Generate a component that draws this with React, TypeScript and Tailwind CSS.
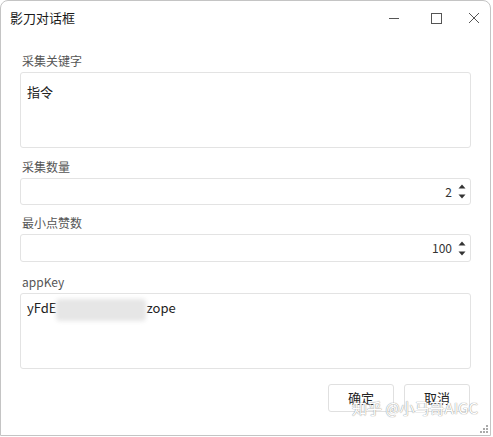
import React from 'react';

const font = { fontFamily: '"Noto Sans CJK SC", "Noto Sans", sans-serif' };

function Label({ children }: { children: React.ReactNode }) {
  return <div className="text-[12px] leading-[16px] text-[#555] pl-[2px] mb-[3px]">{children}</div>;
}

function Spinner() {
  return (
    <div className="flex flex-col items-center gap-[5px] ml-[6px] mr-[4px]">
      <svg width="8" height="5" viewBox="0 0 8 5"><path d="M4 0.5 L7.5 4.5 L0.5 4.5 Z" fill="#333" /></svg>
      <svg width="8" height="5" viewBox="0 0 8 5"><path d="M0.5 0.5 L7.5 0.5 L4 4.5 Z" fill="#333" /></svg>
    </div>
  );
}

function NumberField({ value, h }: { value: string; h: string }) {
  return (
    <div className={`${h} rounded-[3px] border border-[#e3e3e3] flex items-center justify-end`}>
      <span className="text-[12px] leading-[16px] text-[#333]">{value}</span>
      <Spinner />
    </div>
  );
}

export default function App() {
  return (
    <div className="w-[493px] h-[437px] bg-white" style={font}>
      <div className="w-[491px] h-[436px] border border-[#c4c4c4] rounded-t-[8px] flex flex-col relative">
        <div className="h-[34px] flex items-center pl-[9px] pr-[10px]">
          <span className="text-[13px] leading-[18px] text-[#1a1a1a] flex-1">影刀对话框</span>
          <div className="w-[10px] h-[1px] bg-[#555]" />
          <div className="w-[11px] h-[11px] border border-[#555] ml-[32px]" />
          <svg className="ml-[26px]" width="12" height="12" viewBox="0 0 12 12"><path d="M1 1 L11 11 M11 1 L1 11" stroke="#555" strokeWidth="1" /></svg>
        </div>
        <div className="flex flex-col px-[19px] pt-[18px]">
          <Label>采集关键字</Label>
          <div className="h-[76px] rounded-[3px] border border-[#e3e3e3] px-[6px] pt-[5px]">
            <span className="text-[13px] leading-[18px] text-[#222]">指令</span>
          </div>
          <div className="mt-[11px]"><Label>采集数量</Label></div>
          <NumberField value="2" h="h-[27px]" />
          <div className="mt-[10px]"><Label>最小点赞数</Label></div>
          <NumberField value="100" h="h-[28px]" />
          <div className="mt-[12px]"><Label>appKey</Label></div>
          <div className="h-[76px] rounded-[3px] border border-[#e3e3e3] px-[6px] pt-[5px] flex items-start">
            <span className="text-[13px] leading-[18px] text-[#222]">yFdE</span>
            <div className="w-[90px] h-[22px] bg-[#e6e6e6] blur-[2px] rounded-[4px] mt-[0px]" />
            <span className="text-[13px] leading-[18px] text-[#222]">zope</span>
          </div>
          <div className="flex justify-end gap-[10px] mt-[15px] mr-[1px]">
            <div className="w-[66px] h-[28px] rounded-[3px] border border-[#e0e0e0] flex items-center justify-center text-[13px] leading-[18px] text-[#222]">确定</div>
            <div className="w-[66px] h-[28px] rounded-[3px] border border-[#e0e0e0] flex items-center justify-center text-[13px] leading-[18px] text-[#222]">取消</div>
          </div>
        </div>
        <div className="absolute right-[12px] bottom-[18px] text-[15px] leading-[18px] text-white [text-shadow:0_0_1px_#999,0_0_1px_#999]">知乎 @小马哥AIGC</div>
        <div className="absolute right-[2px] bottom-[2px] grid grid-cols-3 gap-[1px]">
          <div /><div /><div className="w-[2px] h-[2px] bg-[#aaa]" />
          <div /><div className="w-[2px] h-[2px] bg-[#aaa]" /><div className="w-[2px] h-[2px] bg-[#aaa]" />
          <div className="w-[2px] h-[2px] bg-[#aaa]" /><div className="w-[2px] h-[2px] bg-[#aaa]" /><div className="w-[2px] h-[2px] bg-[#aaa]" />
        </div>
      </div>
    </div>
  );
}
